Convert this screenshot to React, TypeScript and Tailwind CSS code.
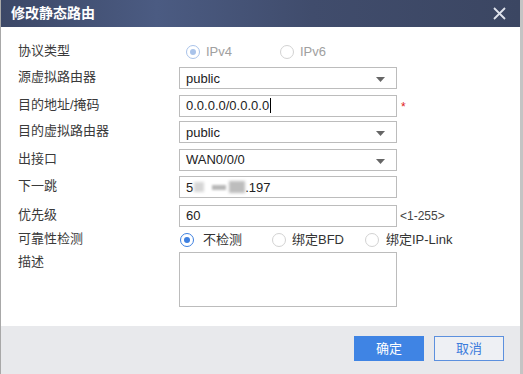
import React from "react"

const font = { fontFamily: '"Liberation Sans", Arial, "Noto Sans CJK SC", sans-serif' }

function Radio({ checked, disabled }: { checked?: boolean; disabled?: boolean }) {
  if (checked) {
    return (
      <span className={`flex h-[14px] w-[14px] items-center justify-center rounded-full border ${disabled ? "border-[#a9c3ea]" : "border-[#3d7fe0]"} bg-white`}>
        <span className={`h-[6px] w-[6px] rounded-full ${disabled ? "bg-[#a9c3ea]" : "bg-[#3d7fe0]"}`} />
      </span>
    )
  }
  return <span className="h-[14px] w-[14px] rounded-full border border-[#d2d2d2] bg-white" />
}

function Caret() {
  return (
    <svg width="9" height="5" viewBox="0 0 9 5" className="absolute right-[11px] top-[9px]">
      <path d="M0 0h9L4.5 5z" fill="#666" />
    </svg>
  )
}

function Select({ value }: { value: string }) {
  return (
    <div className="relative flex h-[22px] w-[218px] items-center border border-[#bcbcbc] bg-white pl-[6px] text-[13px] text-[#222]">
      {value}
      <Caret />
    </div>
  )
}

function Field({ children }: { children?: React.ReactNode }) {
  return (
    <div className="flex h-[22px] w-[218px] items-center border border-[#bcbcbc] bg-white pl-[6px] text-[13px] text-[#222]">
      {children}
    </div>
  )
}

function Row({ label, children, className = "" }: { label: string; children: React.ReactNode; className?: string }) {
  return (
    <div className={`flex items-center ${className}`}>
      <div className="w-[161px] pb-[3px] text-[13px] text-[#3a3a3a]">{label}</div>
      {children}
    </div>
  )
}

export default function App() {
  return (
    <div style={font} className="flex h-[374px] w-[523px] flex-col overflow-hidden border-l border-r-[3px] border-l-[#a8a8a8] border-r-[#c4c4c4] bg-white">
      <div className="flex h-[27px] shrink-0 items-center justify-between bg-[linear-gradient(90deg,#3c4867_0%,#4b5b82_30%,#404c6c_60%,#3b4662_100%)] pl-[10px] pr-[14px]">
        <span className="text-[14px] font-bold text-white">修改静态路由</span>
        <svg width="13" height="13" viewBox="0 0 13 13">
          <path d="M1 1l11 11M12 1L1 12" stroke="#dfe3ec" strokeWidth="1.8" />
        </svg>
      </div>

      <div className="flex flex-1 flex-col bg-white pl-[17px] pt-[15px]">
        <Row label="协议类型" className="h-[20px]">
          <div className="flex items-center pl-[7px] text-[13px] text-[#a0a0a0]">
            <Radio checked disabled />
            <span className="ml-[6px] w-[74px]">IPv4</span>
            <Radio />
            <span className="ml-[6px]">IPv6</span>
          </div>
        </Row>
        <Row label="源虚拟路由器" className="mt-[5px]">
          <Select value="public" />
        </Row>
        <Row label="目的地址/掩码" className="mt-[5px]">
          <Field>
            0.0.0.0/0.0.0.0
            <span className="ml-[1px] h-[15px] w-[1px] bg-black" />
          </Field>
          <span className="ml-[4px] mt-[2px] text-[12px] text-[#e02020]">*</span>
        </Row>
        <Row label="目的虚拟路由器" className="mt-[4px]">
          <Select value="public" />
        </Row>
        <Row label="出接口" className="mt-[5px]">
          <Select value="WAN0/0/0" />
        </Row>
        <Row label="下一跳" className="mt-[5px]">
          <Field>
            5
            <span className="ml-[1px] h-[10px] w-[10px] bg-[#d6d6d6] blur-[1.5px]" />
            <span className="ml-[8px] h-[5px] w-[14px] bg-[#b8b8b8] blur-[1px]" />
            <span className="ml-[3px] h-[12px] w-[16px] bg-[#bdbdbd] blur-[1.5px]" />
            <span>.197</span>
          </Field>
        </Row>
        <Row label="优先级" className="mt-[6px]">
          <Field>60</Field>
          <span className="ml-[3px] text-[12px] text-[#444]">&lt;1-255&gt;</span>
        </Row>
        <Row label="可靠性检测" className="mt-[3px] h-[20px]">
          <div className="flex items-center pl-[1px] text-[13px] text-[#333]">
            <Radio checked />
            <span className="ml-[9px] w-[69px]">不检测</span>
            <Radio />
            <span className="ml-[6px] w-[73px]">绑定BFD</span>
            <Radio />
            <span className="ml-[7px]">绑定IP-Link</span>
          </div>
        </Row>
        <div className="mt-[2px] flex items-start">
          <div className="w-[161px] text-[13px] text-[#3a3a3a]">描述</div>
          <div className="h-[55px] w-[218px] border border-[#bcbcbc] bg-white" />
        </div>
      </div>

      <div className="flex h-[48px] shrink-0 items-start justify-end gap-[10px] bg-[#e8e9ec] pr-[16px] pt-[10px]">
        <button className="h-[25px] w-[70px] bg-[#3f84e4] text-[13px] text-white">确定</button>
        <button className="h-[25px] w-[70px] border border-[#5c90de] bg-[#eef0f4] text-[13px] text-[#3b7bdc]">取消</button>
      </div>
    </div>
  )
}
